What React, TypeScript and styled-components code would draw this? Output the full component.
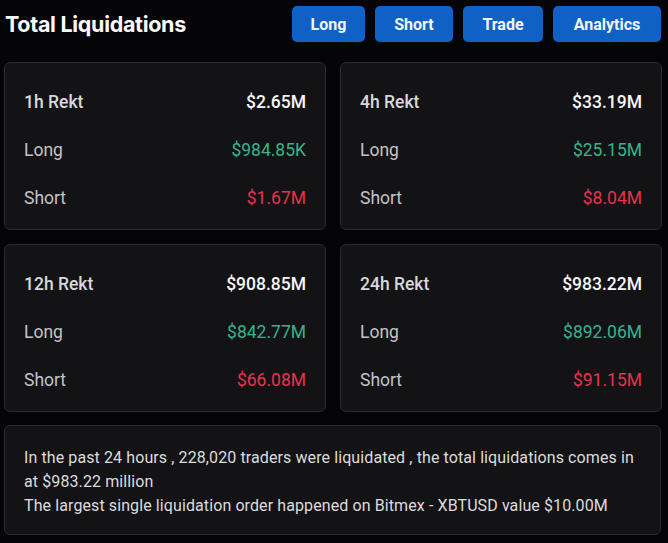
import React from 'react';
import styled, { createGlobalStyle } from 'styled-components';

const GlobalStyle = createGlobalStyle`
  html, body {
    margin: 0;
    background: #050507;
  }
  body {
    font-family: Roboto, "Noto Sans", sans-serif;
    color: #e6e6e6;
  }
`;

const Page = styled.div`
  width: 668px;
  height: 543px;
  padding: 6px 7px 0 4px;
  box-sizing: border-box;
  display: flex;
  flex-direction: column;
`;

const Header = styled.div`
  display: flex;
  align-items: center;
  justify-content: space-between;
  height: 36px;
`;

const Title = styled.h1`
  margin: 0 0 0 1px;
  font-family: Inter, "Noto Sans", sans-serif;
  font-size: 21.5px;
  font-weight: 700;
  letter-spacing: -0.3px;
  color: #fafafa;
`;

const Buttons = styled.div`
  display: flex;
  gap: 10px;
`;

const Button = styled.button<{ $w: number }>`
  width: ${(p) => p.$w}px;
  height: 36px;
  border: none;
  border-radius: 5px;
  background: #0f61c6;
  color: #f2f6fc;
  font-family: Roboto, sans-serif;
  font-size: 16px;
  font-weight: 700;
  cursor: pointer;
`;

const Grid = styled.div`
  margin-top: 20px;
  display: grid;
  grid-template-columns: 322px 322px;
  column-gap: 14px;
  row-gap: 14px;
`;

const Card = styled.div`
  background: #131316;
  border: 1px solid #2b2b30;
  border-radius: 6px;
  box-sizing: border-box;
`;

const StatCard = styled(Card)`
  height: 168px;
  padding: 15px 19px 0 19px;
  display: flex;
  flex-direction: column;
`;

const Row = styled.div`
  display: flex;
  justify-content: space-between;
  align-items: center;
  height: 48px;
  font-size: 17.5px;
`;

const Label = styled.span<{ $head?: boolean }>`
  color: ${(p) => (p.$head ? '#d8d8d8' : '#c4c4c6')};
  font-weight: ${(p) => (p.$head ? 500 : 400)};
`;

const Value = styled.span<{ $tone: 'total' | 'long' | 'short' }>`
  color: ${(p) =>
    p.$tone === 'long' ? '#36b48c' : p.$tone === 'short' ? '#e5334d' : '#f7f7f7'};
  font-weight: ${(p) => (p.$tone === 'total' ? 500 : 400)};
`;

const Summary = styled(Card)`
  margin-top: 13px;
  height: 110px;
  padding: 20px 16px 0 19px;
  font-size: 16px;
  line-height: 24px;
  color: #dcdcdc;
  letter-spacing: 0.1px;
`;

const stats = [
  { period: '1h', total: '$2.65M', long: '$984.85K', short: '$1.67M' },
  { period: '4h', total: '$33.19M', long: '$25.15M', short: '$8.04M' },
  { period: '12h', total: '$908.85M', long: '$842.77M', short: '$66.08M' },
  { period: '24h', total: '$983.22M', long: '$892.06M', short: '$91.15M' },
];

export default function App() {
  return (
    <Page>
      <GlobalStyle />
      <Header>
        <Title>Total Liquidations</Title>
        <Buttons>
          <Button $w={73}>Long</Button>
          <Button $w={78}>Short</Button>
          <Button $w={80}>Trade</Button>
          <Button $w={108}>Analytics</Button>
        </Buttons>
      </Header>
      <Grid>
        {stats.map((s) => (
          <StatCard key={s.period}>
            <Row>
              <Label $head>{s.period} Rekt</Label>
              <Value $tone="total">{s.total}</Value>
            </Row>
            <Row>
              <Label>Long</Label>
              <Value $tone="long">{s.long}</Value>
            </Row>
            <Row>
              <Label>Short</Label>
              <Value $tone="short">{s.short}</Value>
            </Row>
          </StatCard>
        ))}
      </Grid>
      <Summary>
        In the past 24 hours , 228,020 traders were liquidated , the total liquidations comes in
        at $983.22 million
        <br />
        The largest single liquidation order happened on Bitmex - XBTUSD value $10.00M
      </Summary>
    </Page>
  );
}
